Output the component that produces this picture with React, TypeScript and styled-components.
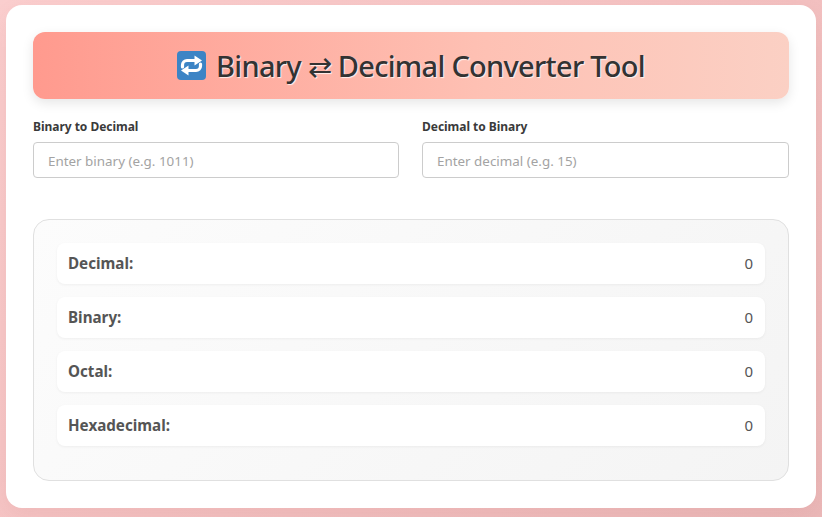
import React from "react";
import styled, { createGlobalStyle } from "styled-components";

const Global = createGlobalStyle`
  html, body { margin: 0; padding: 0; height: 100%; }
  body {
    background: linear-gradient(135deg, #fbcfcf 0%, #f5c3c3 50%, #ebb9b9 100%);
    font-family: "Noto Sans", "Open Sans", "Liberation Sans", sans-serif;
    overflow: hidden;
  }
`;

const Page = styled.div`
  width: 822px;
  height: 517px;
  box-sizing: border-box;
  padding: 5px 6px 9px;
`;

const Card = styled.main`
  box-sizing: border-box;
  height: 503px;
  background: #fff;
  border-radius: 16px;
  padding: 27px;
  box-shadow: 0 8px 24px rgba(180, 90, 90, 0.12);
`;

const Header = styled.h1`
  margin: 0;
  height: 67px;
  border-radius: 12px;
  background: linear-gradient(90deg, #ff9a8e 0%, #fec1b4 60%, #fbd0c4 100%);
  box-shadow: 0 4px 12px rgba(0, 0, 0, 0.1);
  display: flex;
  align-items: center;
  justify-content: center;
  gap: 10px;
  font-size: 29px;
  font-weight: 500;
  color: #333;
  text-shadow: 1px 1px 1px rgba(255, 255, 255, 0.8);
  letter-spacing: -0.72px;
`;

const Inputs = styled.div`
  display: grid;
  grid-template-columns: 366px 367px;
  column-gap: 23px;
  margin-top: 19px;
`;

const Field = styled.label`
  display: flex;
  flex-direction: column;
  gap: 7px;
`;

const FieldLabel = styled.span`
  font-size: 12px;
  line-height: 17px;
  font-weight: 700;
  letter-spacing: -0.03px;
  color: #3a3a3a;
`;

const TextInput = styled.input`
  box-sizing: border-box;
  width: 100%;
  height: 36px;
  padding: 1px 14px 0;
  border: 1px solid #ccc;
  border-radius: 4px;
  background: #fff;
  font: 13.4px "Noto Sans", "Open Sans", sans-serif;
  color: #333;
  outline: none;
  &::placeholder { color: #a3a3a3; opacity: 1; }
`;

const Results = styled.section`
  box-sizing: border-box;
  height: 262px;
  margin-top: 41px;
  padding: 23px;
  border: 1px solid #e0e0e0;
  border-radius: 16px;
  background: linear-gradient(135deg, #fcfcfc 0%, #f4f4f4 100%);
  display: flex;
  flex-direction: column;
  gap: 13px;
`;

const Row = styled.div`
  box-sizing: border-box;
  height: 41px;
  padding: 0 12px 2px 11px;
  display: flex;
  align-items: center;
  justify-content: space-between;
  background: #fff;
  border-radius: 8px;
  box-shadow: 0 1px 3px rgba(0, 0, 0, 0.05);
  font-size: 15.2px;
  color: #555;
`;

const RowLabel = styled.strong`
  font-weight: 700;
  color: #555;
`;

const Value = styled.span`
  font-size: 15px;
  color: #555;
`;

const RepeatIcon = () => (
  <svg width="29" height="29" viewBox="0 0 29 29" aria-hidden="true">
    <rect width="29" height="29" rx="4" fill="#3c84c5" />
    <g fill="none" stroke="#fff" strokeWidth="3.2" strokeLinecap="round" strokeLinejoin="round">
      <path d="M5.5 16v-2a4.5 4.5 0 0 1 4.5-4.5h9" />
      <path d="M23.5 13v2a4.5 4.5 0 0 1-4.5 4.5h-9" />
    </g>
    <path d="M17.5 4.5 25 9.5l-7.5 5z" fill="#fff" />
    <path d="M11.5 14.5 4 19.5l7.5 5z" fill="#fff" />
  </svg>
);

const rows = ["Decimal:", "Binary:", "Octal:", "Hexadecimal:"];

export default function App() {
  return (
    <>
      <Global />
      <Page>
        <Card>
          <Header>
            <RepeatIcon />
            <span>Binary ⇄ Decimal Converter Tool</span>
          </Header>
          <Inputs>
            <Field>
              <FieldLabel>Binary to Decimal</FieldLabel>
              <TextInput placeholder="Enter binary (e.g. 1011)" />
            </Field>
            <Field>
              <FieldLabel>Decimal to Binary</FieldLabel>
              <TextInput placeholder="Enter decimal (e.g. 15)" />
            </Field>
          </Inputs>
          <Results>
            {rows.map((r) => (
              <Row key={r}>
                <RowLabel>{r}</RowLabel>
                <Value>0</Value>
              </Row>
            ))}
          </Results>
        </Card>
      </Page>
    </>
  );
}
